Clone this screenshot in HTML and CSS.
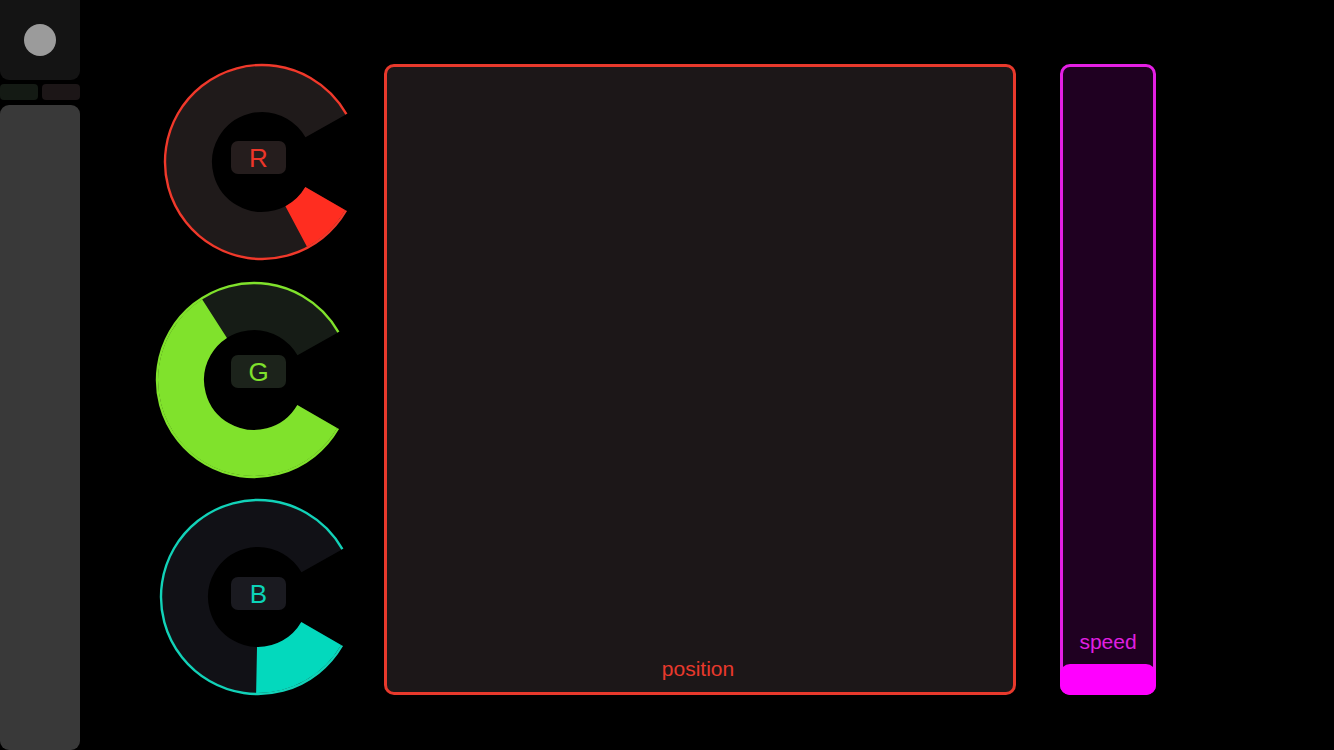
FILE: index.html
```html
<!DOCTYPE html>
<html>
<head>
<meta charset="utf-8">
<link rel="stylesheet" href="styles.css">
</head>
<body>
<div class="app">
  <div class="sidebar">
    <div class="sb-top"><div class="sb-dot"></div></div>
    <div class="sb-row">
      <div class="sb-chip sb-chip-g"></div>
      <div class="sb-chip sb-chip-r"></div>
    </div>
    <div class="sb-panel"></div>
  </div>

  <div class="knobs">
    <div class="knob knob-r">
      <svg width="210" height="218" viewBox="0 0 210 218">
        <circle class="k-track" cx="112" cy="107" r="73" stroke-width="46" stroke-dasharray="382.2 1000" transform="rotate(30 112 107)"/>
        <circle class="k-fill" cx="112" cy="107" r="73" stroke-width="46" stroke-dasharray="40.8 1000" transform="rotate(30 112 107)"/>
        <circle class="k-ring" cx="112" cy="107" r="97" stroke-width="2.4" stroke-dasharray="507.9 1000" transform="rotate(30 112 107)"/>
      </svg>
      <div class="k-label">R</div>
    </div>
    <div class="knob knob-g">
      <svg width="210" height="218" viewBox="0 0 210 218">
        <circle class="k-track" cx="104" cy="107" r="73" stroke-width="46" stroke-dasharray="382.2 1000" transform="rotate(30 104 107)"/>
        <circle class="k-fill" cx="104" cy="107" r="73" stroke-width="46" stroke-dasharray="263.7 1000" transform="rotate(30 104 107)"/>
        <circle class="k-ring" cx="104" cy="107" r="97" stroke-width="2.4" stroke-dasharray="507.9 1000" transform="rotate(30 104 107)"/>
      </svg>
      <div class="k-label">G</div>
    </div>
    <div class="knob knob-b">
      <svg width="210" height="218" viewBox="0 0 210 218">
        <circle class="k-track" cx="108" cy="106" r="73" stroke-width="46" stroke-dasharray="382.2 1000" transform="rotate(30 108 106)"/>
        <circle class="k-fill" cx="108" cy="106" r="73" stroke-width="46" stroke-dasharray="77.7 1000" transform="rotate(30 108 106)"/>
        <circle class="k-ring" cx="108" cy="106" r="97" stroke-width="2.4" stroke-dasharray="507.9 1000" transform="rotate(30 108 106)"/>
      </svg>
      <div class="k-label">B</div>
    </div>
  </div>

  <div class="pad">
    <div class="pad-label">position</div>
  </div>

  <div class="slider">
    <div class="slider-label">speed</div>
    <div class="slider-fill"></div>
  </div>
</div>
</body>
</html>
```

FILE: styles.css
```css
* { box-sizing: border-box; }
html, body {
  margin: 0;
  padding: 0;
  background: #000;
  width: 1334px;
  height: 750px;
  overflow: hidden;
  font-family: "Liberation Sans", Arial, sans-serif;
}
.app {
  display: flex;
  align-items: flex-start;
  height: 750px;
}

/* sidebar */
.sidebar {
  width: 80px;
  height: 750px;
  display: flex;
  flex-direction: column;
  flex: none;
}
.sb-top {
  height: 80px;
  background: #141414;
  border-radius: 0 0 9px 9px;
  display: flex;
  align-items: center;
  justify-content: center;
}
.sb-dot {
  width: 32px;
  height: 32px;
  border-radius: 50%;
  background: #9b9b9b;
}
.sb-row {
  display: flex;
  gap: 4px;
  margin-top: 4px;
  height: 16px;
}
.sb-chip {
  flex: 1;
  border-radius: 4px;
}
.sb-chip-g { background: #141a14; }
.sb-chip-r { background: #1c1617; }
.sb-panel {
  margin-top: 5px;
  flex: 1;
  background: #393939;
  border-radius: 9px;
}

/* knobs */
.knobs {
  margin-left: 70px;
  padding-top: 55px;
  width: 210px;
  display: flex;
  flex-direction: column;
  flex: none;
}
.knob {
  position: relative;
  width: 210px;
  height: 218px;
}
.knob svg { display: block; }
.k-track, .k-fill, .k-ring { fill: none; }
.k-label {
  position: absolute;
  left: 81px;
  width: 55px;
  height: 33px;
  border-radius: 7px;
  display: flex;
  align-items: center;
  justify-content: center;
  font-size: 26px;
  line-height: 1;
}
.knob-r .k-label { top: 86px; background: #251d1d; color: #ec3629; }
.knob-g .k-label { top: 82px; background: #1c231b; color: #7fe02c; }
.knob-b .k-label { top: 86px; background: #1a1a20; color: #0cd3b8; }

.knob-r .k-track { stroke: #1f1a1a; }
.knob-r .k-fill { stroke: #ff2d20; }
.knob-r .k-ring { stroke: #f0392b; }
.knob-g .k-track { stroke: #161c16; }
.knob-g .k-fill { stroke: #80e22c; }
.knob-g .k-ring { stroke: #80e22c; }
.knob-b .k-track { stroke: #111116; }
.knob-b .k-fill { stroke: #03d9bd; }
.knob-b .k-ring { stroke: #12d2b8; }

/* pad */
.pad {
  margin-top: 64px;
  margin-left: 24px;
  width: 632px;
  height: 631px;
  border: 3px solid #e8392c;
  border-radius: 10px;
  background: #1c1718;
  display: flex;
  flex-direction: column;
  justify-content: flex-end;
  align-items: center;
  padding-bottom: 11px;
  flex: none;
}
.pad-label {
  color: #e8392c;
  font-size: 21px;
  line-height: 24px;
  margin-right: 4px;
}

/* slider */
.slider {
  position: relative;
  margin-top: 64px;
  margin-left: 44px;
  width: 96px;
  height: 631px;
  border: 3px solid #e51fe5;
  border-radius: 10px;
  background: #1f0021;
  display: flex;
  flex-direction: column;
  justify-content: flex-end;
  align-items: center;
  padding-bottom: 38px;
  flex: none;
}
.slider-label {
  color: #e01fe0;
  font-size: 21px;
  line-height: 24px;
}
.slider-fill {
  position: absolute;
  left: -3px;
  right: -3px;
  bottom: -3px;
  height: 31px;
  background: #ff00ff;
  border-radius: 10px;
}
```
